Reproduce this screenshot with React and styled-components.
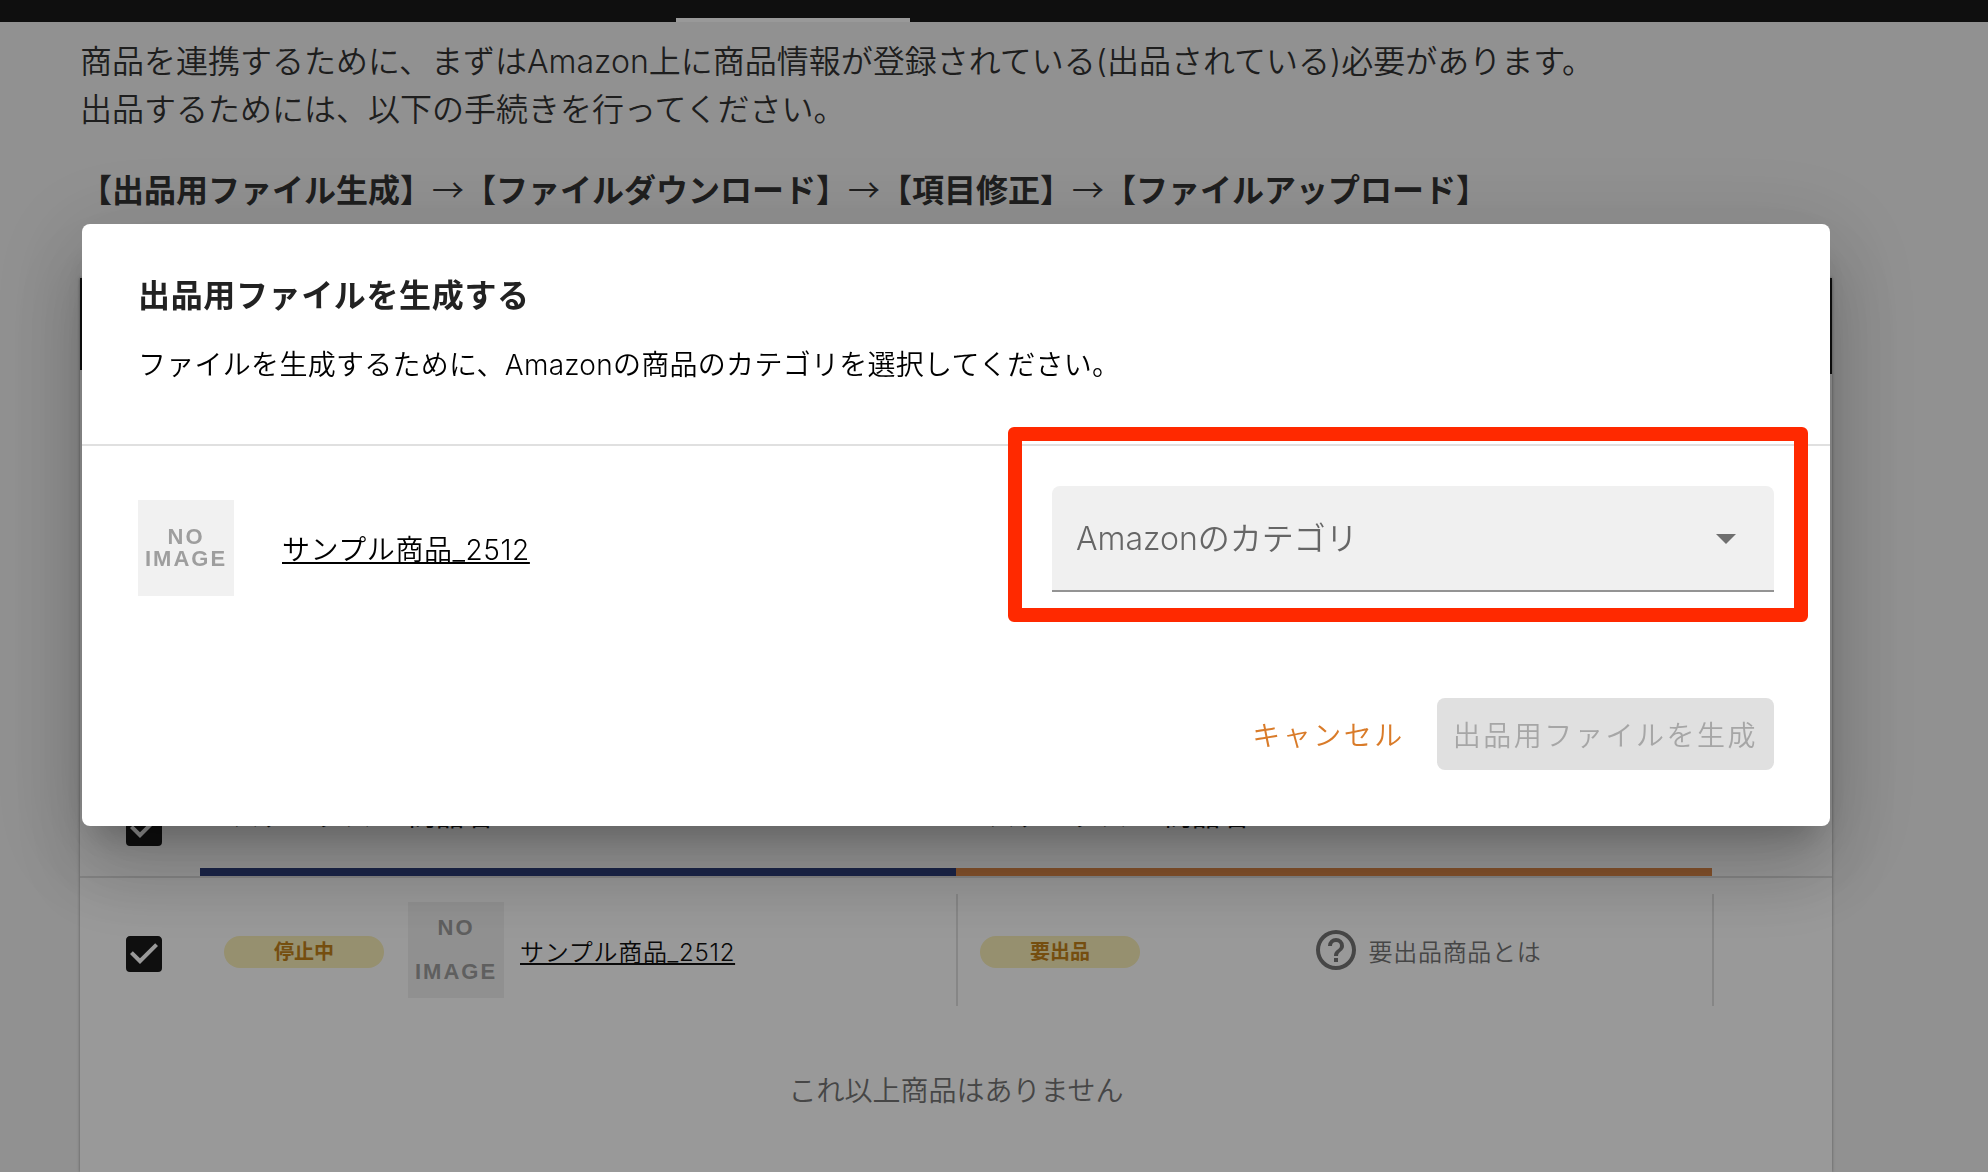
import { useState } from "react";
import styled, { createGlobalStyle } from "styled-components";

const GlobalStyle = createGlobalStyle`
  * {
    box-sizing: border-box;
  }

  body {
    margin: 0;
    background: #f2f2f2;
    color: #333;
    font-family: Inter, "Noto Sans CJK JP", sans-serif;
    font-weight: 350;
  }

  button, select {
    font: inherit;
  }
`;

function Checkbox({ label }) {
  const [checked, setChecked] = useState(true);

  return (
    <CheckLabel>
      <CheckInput
        type="checkbox"
        aria-label={label}
        checked={checked}
        onChange={(e) => setChecked(e.target.checked)}
      />
      <svg width="48" height="48" viewBox="0 0 24 24" fill="currentColor" aria-hidden="true">
        {checked ? (
          <path d="M10,17L5,12L6.41,10.58L10,14.17L17.59,6.58L19,8M19,3H5C3.89,3 3,3.89 3,5V19A2,2 0 0,0 5,21H19A2,2 0 0,0 21,19V5C21,3.89 20.1,3 19,3Z" />
        ) : (
          <path d="M19,3H5C3.89,3 3,3.89 3,5V19A2,2 0 0,0 5,21H19A2,2 0 0,0 21,19V5C21,3.89 20.1,3 19,3M19,5V19H5V5H19Z" />
        )}
      </svg>
    </CheckLabel>
  );
}

function HelpIcon() {
  return (
    <svg width="48" height="48" viewBox="0 0 24 24" fill="currentColor" aria-hidden="true">
      <path d="M11,18H13V16H11V18M12,2A10,10 0 0,0 2,12A10,10 0 0,0 12,22A10,10 0 0,0 22,12A10,10 0 0,0 12,2M12,20C7.59,20 4,16.41 4,12C4,7.59 7.59,4 12,4C16.41,4 20,7.59 20,12C20,16.41 16.41,20 12,20M12,6A4,4 0 0,0 8,10H10A2,2 0 0,1 12,8A2,2 0 0,1 14,10C14,12 11,11.75 11,15H13C13,12.75 16,12.5 16,10A4,4 0 0,0 12,6Z" />
    </svg>
  );
}

function NoImage({ loose }) {
  return (
    <Thumb $loose={loose}>
      <span>NO</span>
      <span>IMAGE</span>
    </Thumb>
  );
}

function ProductTable() {
  return (
    <Table>
      <colgroup>
        <col width="120" />
        <col />
        <col />
        <col width="120" />
      </colgroup>
      <thead>
        <tr>
          <HeadCell>
            <HeadCheck>
              <Checkbox label="すべて選択" />
            </HeadCheck>
          </HeadCell>
          <HeadCell>
            <HeadGroup $color="#2c3d7a">
              <StatusHead>ステータス</StatusHead>
              商品名
            </HeadGroup>
          </HeadCell>
          <HeadCell>
            <HeadGroup $color="#df8a49">
              <StatusHead>ステータス</StatusHead>
              商品名
            </HeadGroup>
          </HeadCell>
          <HeadCell />
        </tr>
      </thead>
      <tbody>
        <tr>
          <Cell>
            <RowCheck>
              <Checkbox label="サンプル商品_2512" />
            </RowCheck>
          </Cell>
          <Cell>
            <RowGroup>
              <Badge>停止中</Badge>
              <NoImage loose />
              <RowLink href="#product">サンプル商品_2512</RowLink>
            </RowGroup>
          </Cell>
          <Cell>
            <RowGroup $divided>
              <Badge>要出品</Badge>
              <HelpLink href="#help">
                <HelpIcon />
                要出品商品とは
              </HelpLink>
            </RowGroup>
          </Cell>
          <Cell>
            <RowGroup $divided />
          </Cell>
        </tr>
      </tbody>
    </Table>
  );
}

function GenerateDialog() {
  return (
    <Dialog role="dialog" aria-modal="true" aria-labelledby="dialog-title">
      <DialogHeader>
        <DialogTitle id="dialog-title">出品用ファイルを生成する</DialogTitle>
        <DialogText>
          ファイルを生成するために、Amazonの商品のカテゴリを選択してください。
        </DialogText>
      </DialogHeader>
      <DialogBody>
        <NoImage />
        <DialogLink href="#product">サンプル商品_2512</DialogLink>
        <SelectField>
          <Select aria-label="Amazonのカテゴリ" defaultValue="">
            <option value="">Amazonのカテゴリ</option>
          </Select>
          <Caret width="48" height="48" viewBox="0 0 24 24" aria-hidden="true">
            <path d="M7,10L12,15L17,10H7Z" fill="currentColor" />
          </Caret>
          <Highlight />
        </SelectField>
      </DialogBody>
      <DialogActions>
        <CancelButton type="button">キャンセル</CancelButton>
        <SubmitButton type="button" disabled>
          出品用ファイルを生成
        </SubmitButton>
      </DialogActions>
    </Dialog>
  );
}

export default function App() {
  return (
    <>
      <GlobalStyle />
      <Page>
        <TopBar>
          <ActiveTab />
        </TopBar>
        <Content>
          <Lead>
            商品を連携するために、まずはAmazon上に商品情報が登録されている(出品されている)必要があります。
            <br />
            出品するためには、以下の手続きを行ってください。
          </Lead>
          <Steps>
            <b>【出品用ファイル生成】</b>→<b>【ファイルダウンロード】</b>→<b>【項目修正】</b>→
            <b>【ファイルアップロード】</b>
          </Steps>
          <Card>
            <CardBar>
              <CardTab />
            </CardBar>
            <CardTools />
            <ProductTable />
            <EndNote>これ以上商品はありません</EndNote>
          </Card>
        </Content>
      </Page>
      <Overlay>
        <GenerateDialog />
      </Overlay>
    </>
  );
}

const Page = styled.div`
  display: flex;
  flex-direction: column;
  height: 100vh;
  overflow: hidden;
`;

const TopBar = styled.header`
  display: flex;
  align-items: flex-end;
  flex-shrink: 0;
  height: 22px;
  padding-left: 34%;
  background: #191919;
`;

const ActiveTab = styled.div`
  width: 234px;
  height: 4px;
  background: #fff;
`;

const Content = styled.main`
  display: flex;
  flex-direction: column;
  flex: 1;
  padding: 16px 156px 0 80px;
`;

const Lead = styled.p`
  margin: 0;
  font-size: 32px;
  line-height: 48px;
`;

const Steps = styled.p`
  margin: 30px 0 66px;
  font-family: "Noto Sans CJK JP", sans-serif;
  font-size: 32px;
  line-height: 48px;

  b {
    font-weight: 700;
  }
`;

const Card = styled.section`
  flex: 1;
  background: #fff;
  box-shadow: 0 0 3px rgba(0, 0, 0, 0.4);
`;

const CardBar = styled.div`
  display: flex;
  align-items: flex-end;
  height: 96px;
  background: #191919;
`;

const CardTab = styled.div`
  width: 50%;
  height: 4px;
  background: #fff;
`;

const CardTools = styled.div`
  height: 386px;
`;

const Table = styled.table`
  width: 100%;
  table-layout: fixed;
  border-spacing: 0;
`;

const HeadCell = styled.th`
  padding: 0;
  border-bottom: 2px solid #e0e0e0;
  font-weight: 400;
  vertical-align: bottom;
`;

const HeadGroup = styled.div`
  display: flex;
  align-items: center;
  height: 116px;
  padding-left: 32px;
  border-bottom: 8px solid ${(props) => props.$color};
  color: #111;
  font-size: 28px;
`;

const StatusHead = styled.span`
  width: 176px;
  text-align: left;
`;

const HeadCheck = styled.div`
  display: flex;
  padding: 0 0 24px 40px;
`;

const Cell = styled.td`
  padding: 16px 0;
  vertical-align: top;
`;

const RowCheck = styled.div`
  display: flex;
  padding: 36px 0 0 40px;
`;

const RowGroup = styled.div`
  display: flex;
  align-items: center;
  height: 112px;
  padding-left: 22px;
  border-left: 2px solid ${(props) => (props.$divided ? "#e0e0e0" : "transparent")};
`;

const CheckLabel = styled.label`
  position: relative;
  display: flex;
  color: #191919;
  cursor: pointer;
`;

const CheckInput = styled.input`
  position: absolute;
  inset: 0;
  margin: 0;
  opacity: 0;
`;

const Badge = styled.span`
  flex-shrink: 0;
  width: 160px;
  margin: 4px 24px 0 0;
  border-radius: 16px;
  background: #faf0b9;
  color: #c48319;
  font-size: 20px;
  font-weight: 700;
  line-height: 32px;
  text-align: center;
`;

const Thumb = styled.div`
  display: flex;
  flex-direction: column;
  flex-shrink: 0;
  align-items: center;
  justify-content: center;
  width: 96px;
  height: 96px;
  background: #f1f1f1;
  color: #9e9e9e;
  font-family: "Liberation Sans", sans-serif;
  font-size: 22px;
  font-weight: 700;
  letter-spacing: 2px;
  line-height: ${(props) => (props.$loose ? "44px" : "22px")};
`;

const RowLink = styled.a`
  margin-left: 16px;
  color: #111;
  font-size: 24px;
  letter-spacing: 0.03em;
  text-decoration-thickness: 2px;
  text-underline-offset: 2px;
  text-decoration-skip-ink: none;
`;

const HelpLink = styled.a`
  display: flex;
  flex: 1;
  align-items: center;
  justify-content: center;
  gap: 8px;
  margin-left: -22px;
  color: #757575;
  font-size: 24px;
  letter-spacing: 0.03em;
  text-decoration: none;
`;

const EndNote = styled.p`
  margin: 48px 0 0;
  color: #757575;
  font-size: 28px;
  line-height: 42px;
  text-align: center;
`;

const Overlay = styled.div`
  position: fixed;
  inset: 0;
  padding: 224px 158px 0 82px;
  background: rgba(0, 0, 0, 0.4);
`;

const Dialog = styled.div`
  border-radius: 8px;
  background: #fff;
  box-shadow:
    0 22px 30px -14px rgba(0, 0, 0, 0.2),
    0 48px 76px 6px rgba(0, 0, 0, 0.14),
    0 18px 92px 16px rgba(0, 0, 0, 0.12);
`;

const DialogHeader = styled.div`
  padding: 48px 56px 58px;
  border-bottom: 2px solid #e0e0e0;
`;

const DialogTitle = styled.h2`
  margin: 0;
  color: #222;
  font-size: 32px;
  font-weight: 700;
  letter-spacing: 0.02em;
  line-height: 48px;
`;

const DialogText = styled.p`
  margin: 24px 0 0;
  color: #000;
  font-size: 28px;
  letter-spacing: 0.01em;
  line-height: 42px;
`;

const DialogBody = styled.div`
  display: flex;
  align-items: center;
  padding: 40px 56px 0;
`;

const DialogLink = styled.a`
  margin-left: 48px;
  color: #000;
  font-size: 28px;
  letter-spacing: 0.02em;
  text-decoration-thickness: 2px;
  text-underline-offset: 2px;
  text-decoration-skip-ink: none;
`;

const SelectField = styled.div`
  position: relative;
  display: flex;
  width: 722px;
  margin: 0 0 18px auto;
`;

const Select = styled.select`
  width: 100%;
  height: 106px;
  padding: 0 72px 0 24px;
  border: 0;
  border-bottom: 2px solid #949494;
  border-radius: 8px 8px 0 0;
  background: #f0f0f0;
  color: #666;
  font-size: 32px;
  appearance: none;
`;

const Caret = styled.svg`
  position: absolute;
  top: 28px;
  right: 24px;
  color: #6f6f6f;
  pointer-events: none;
`;

// Red frame that draws attention to the category field
const Highlight = styled.div`
  position: absolute;
  inset: -59px -34px -30px -44px;
  border: 14px solid #ff2900;
  border-radius: 6px;
  pointer-events: none;
`;

const DialogActions = styled.div`
  display: flex;
  justify-content: flex-end;
  gap: 16px;
  padding: 88px 56px 56px;
`;

const CancelButton = styled.button`
  height: 72px;
  padding: 0 16px;
  border: 0;
  background: none;
  color: #d97b29;
  font-size: 28px;
  letter-spacing: 0.09em;
`;

const SubmitButton = styled.button`
  height: 72px;
  padding: 0 16px;
  border: 0;
  border-radius: 8px;
  background: #e0e0e0;
  color: #a6a6a6;
  font-size: 28px;
  letter-spacing: 0.09em;
`;
